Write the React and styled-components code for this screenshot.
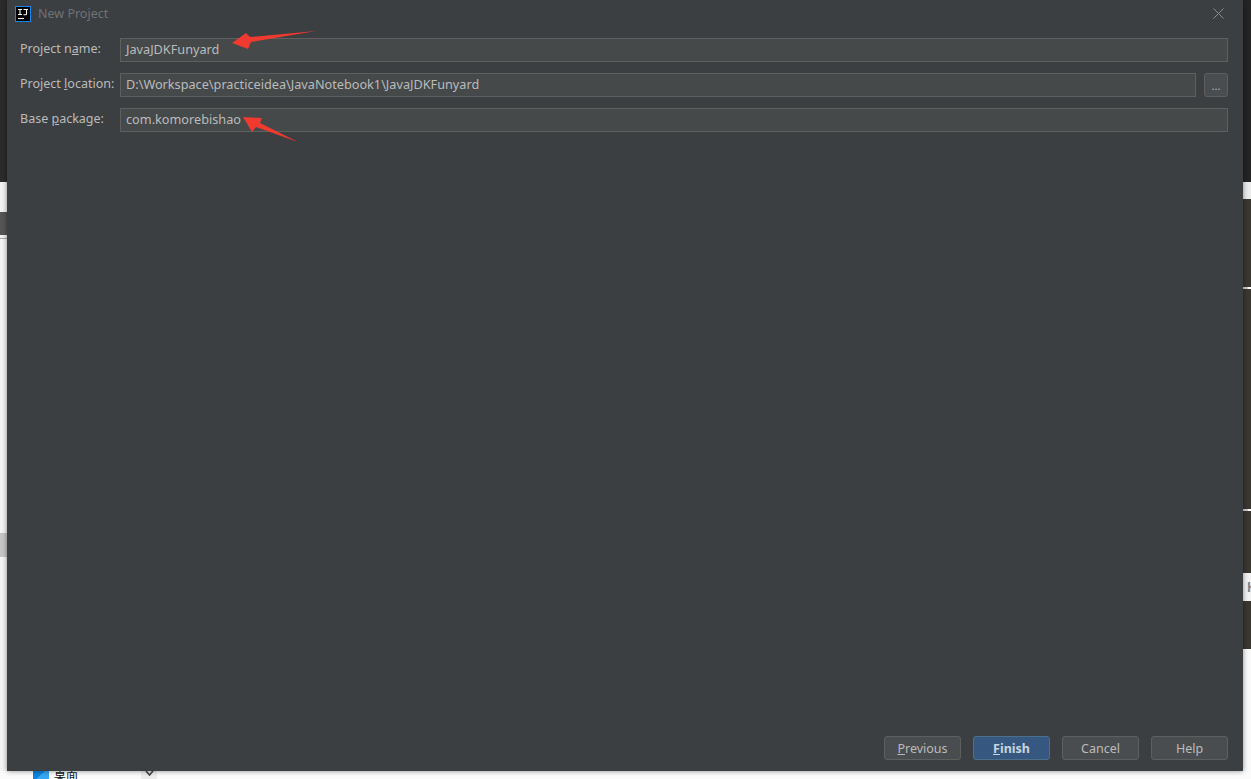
import styled, { createGlobalStyle } from 'styled-components';

const Global = createGlobalStyle`
  html, body {
    margin: 0;
    padding: 0;
    height: 100%;
    overflow: hidden;
    background: #f2f2f2;
  }
  #root {
    height: 100%;
  }
`;

// page left behind the dialog
const Desktop = styled.div`
  width: 1251px;
  height: 779px;
  display: grid;
  grid-template-columns: 7px 1236px 8px;
  grid-template-rows: 771px 8px;
  overflow: hidden;
`;

const Strip = styled.div`
  display: flex;
  flex-direction: column;
  background: ${(p) => p.$bg};
`;

const Band = styled.div`
  height: ${(p) => p.$h}px;
  flex: none;
  background: ${(p) => p.$bg};
`;

const Tick = styled.div`
  width: 5px;
  height: 2px;
  flex: none;
  background: #cfcfcf;
`;

const HiddenTab = styled.div`
  height: 28px;
  flex: none;
  box-sizing: border-box;
  padding-left: 4px;
  background: #f2f2f2;
  color: #858585;
  font: 700 14px/28px 'Liberation Sans', sans-serif;
  overflow: hidden;
`;

const BottomStrip = styled.div`
  grid-column: 1 / -1;
  display: flex;
  align-items: flex-start;
  background: #fbfbfb;
  overflow: hidden;
  font: 12px 'Noto Sans CJK SC', sans-serif;
  color: #111;
`;

const DesktopIcon = styled.span`
  width: 16px;
  height: 8px;
  margin-left: 33px;
  background: linear-gradient(135deg, #0a84e0 50%, #35a6f2 50%);
`;

const DesktopLabel = styled.span`
  width: 24px;
  margin: -4px 0 0 5px;
  line-height: 16px;
  white-space: nowrap;
`;

const Chevron = styled.span`
  width: 16px;
  height: 8px;
  margin-left: 63px;
  background: #ececec;
  display: flex;
  justify-content: center;
`;

const Dialog = styled.div`
  display: flex;
  flex-direction: column;
  background: #3c3f41;
  box-shadow: 0 0 5px rgba(0, 0, 0, 0.45);
  font: 13px 'Noto Sans', 'Liberation Sans', sans-serif;
  color: #bbbbbb;
  position: relative;
`;

const TitleBar = styled.div`
  height: 28px;
  display: flex;
  align-items: center;
  padding: 0 19px 0 8px;
  flex: none;
`;

const TitleText = styled.span`
  margin: 0 0 2px 7px;
  color: #6f7376;
  font-size: 12.5px;
`;

const CloseButton = styled.span`
  margin: 0 0 2px auto;
  display: flex;
`;

const Form = styled.div`
  display: flex;
  flex-direction: column;
  gap: 11px;
  padding: 10px 15px 0 13px;
`;

const Row = styled.div`
  display: flex;
  align-items: center;
  height: 24px;
`;

const Label = styled.label`
  width: 100px;
  flex: none;
  box-sizing: border-box;
  padding-bottom: 3px;
  white-space: nowrap;
  font-size: 12.5px;
`;

const Input = styled.div`
  flex: 1;
  height: 24px;
  box-sizing: border-box;
  border: 1px solid #5e6060;
  background: #45494a;
  padding: 0 5px;
  line-height: 21px;
  font-size: 12.7px;
  color: #bbbbbb;
  white-space: nowrap;
`;

const BrowseButton = styled.div`
  width: 24px;
  height: 24px;
  margin-left: 8px;
  box-sizing: border-box;
  border: 1px solid #5e6060;
  border-radius: 3px;
  background: #4a4d4f;
  color: #bbbbbb;
  text-align: center;
  line-height: 24px;
  font-size: 11px;
`;

const Footer = styled.div`
  margin-top: auto;
  display: flex;
  justify-content: flex-end;
  gap: 12px;
  padding: 0 15px 11px 0;
`;

const Button = styled.div`
  width: 77px;
  height: 24px;
  box-sizing: border-box;
  border: 1px solid ${(p) => (p.$primary ? '#4c708c' : '#5e6060')};
  border-radius: 3px;
  background: ${(p) => (p.$primary ? '#365880' : '#4a4d4f')};
  color: ${(p) => (p.$primary ? '#c9d4de' : '#bbbbbb')};
  font-weight: ${(p) => (p.$primary ? 700 : 400)};
  font-size: 12.5px;
  line-height: 23px;
  text-align: center;
`;

const Arrow = styled.svg`
  position: absolute;
  left: ${(p) => p.$x}px;
  top: ${(p) => p.$y}px;
`;

const Key = styled.span`
  text-decoration: underline;
`;

const IdeaLogo = () => (
  <svg width="16" height="16" viewBox="0 0 16 16">
    <rect x="0.5" y="0.5" width="15" height="15" fill="#000" stroke="#1587f0" />
    <path d="M3 3.5h4M5 3.5v5M3 8.5h4M8.5 3.5h4.5M11.5 3.5v4.5q0 .8-.8.8H8.5" stroke="#fff" strokeWidth="1.1" fill="none" />
    <path d="M3 12.5h6" stroke="#fff" strokeWidth="1.1" />
  </svg>
);

export default function App() {
  return (
    <>
      <Global />
      <Desktop>
        <Strip $bg="#f4f4f4">
          <Band $h={182} $bg="#2b2b2b" />
          <Band $h={30} $bg="#f2f2f2" />
          <Band $h={23} $bg="#555555" />
          <Band $h={3} $bg="#f2f2f2" />
          <Band $h={1} $bg="#a8a8a8" />
          <Band $h={294} $bg="#f4f4f4" />
          <Band $h={24} $bg="#c6c6c6" />
        </Strip>
        <Dialog>
          <TitleBar>
            <IdeaLogo />
            <TitleText>New Project</TitleText>
            <CloseButton>
              <svg width="11" height="11" viewBox="0 0 11 11">
                <path d="M.5.5l10 10M10.5.5l-10 10" stroke="#8a8d8f" strokeWidth="1" fill="none" />
              </svg>
            </CloseButton>
          </TitleBar>
          <Form>
            <Row>
              <Label>Project n<Key>a</Key>me:</Label>
              <Input>JavaJDKFunyard</Input>
            </Row>
            <Row>
              <Label>Project <Key>l</Key>ocation:</Label>
              <Input>D:\Workspace\practiceidea\JavaNotebook1\JavaJDKFunyard</Input>
              <BrowseButton>...</BrowseButton>
            </Row>
            <Row>
              <Label>Base <Key>p</Key>ackage:</Label>
              <Input>com.komorebishao</Input>
            </Row>
          </Form>
          <Footer>
            <Button><Key>P</Key>revious</Button>
            <Button $primary><Key>F</Key>inish</Button>
            <Button>Cancel</Button>
            <Button>Help</Button>
          </Footer>
        </Dialog>
        <Strip $bg="#fafafa">
          <Band $h={182} $bg="#242424" />
          <Band $h={17} $bg="#ececec" />
          <Band $h={88} $bg="#3a3630" />
          <Tick />
          <Band $h={220} $bg="#3a3630" />
          <Tick />
          <Band $h={62} $bg="#3a3630" />
          <HiddenTab>H</HiddenTab>
          <Band $h={48} $bg="#3a3630" />
        </Strip>
        <BottomStrip>
          <DesktopIcon />
          <DesktopLabel>桌面</DesktopLabel>
          <Chevron>
            <svg width="9" height="6" viewBox="0 0 9 6">
              <path d="M1 0l3.5 4L8 0" stroke="#444" strokeWidth="1.6" fill="none" />
            </svg>
          </Chevron>
        </BottomStrip>
        {/* red annotation arrows on top of the screenshot */}
        <Arrow $x={230} $y={29} width="88" height="22" viewBox="0 0 88 22">
          <path d="M2 14L16 4l4 4L86 2 21 13l-3 7z" fill="#f0392f" />
        </Arrow>
        <Arrow $x={242} $y={114} width="60" height="30" viewBox="0 0 60 30">
          <path d="M1 3l19 1-2 5 38 19-42-15-4 5z" fill="#f0392f" />
        </Arrow>
      </Desktop>
    </>
  );
}
